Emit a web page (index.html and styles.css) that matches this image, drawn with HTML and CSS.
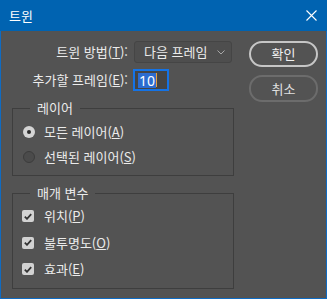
FILE: index.html
```html
<!DOCTYPE html>
<html lang="ko">
<head>
<meta charset="utf-8">
<title>트윈</title>
<link rel="stylesheet" href="styles.css">
</head>
<body>
<div class="window">
  <div class="titlebar">
    <span class="title">트윈</span>
    <svg class="close" width="11" height="11" viewBox="0 0 11 11"><path d="M0.5 0.5 L10.5 10.5 M10.5 0.5 L0.5 10.5" stroke="#fff" stroke-width="1.1" fill="none"/></svg>
  </div>
  <div class="content">
    <div class="left">
      <div class="fields">
        <label class="lbl">트윈 방법(<u>T</u>):</label>
        <div class="select"><span>다음 프레임</span><svg width="8" height="5" viewBox="0 0 8 5"><path d="M0.5 0.5 L4 4 L7.5 0.5" stroke="#a8a8a8" stroke-width="1" fill="none"/></svg></div>
        <label class="lbl">추가할 프레임(<u>E</u>):</label>
        <div class="input"><span class="sel">10</span><span class="caret"></span></div>
      </div>
      <fieldset class="group">
        <legend>레이어</legend>
        <div class="opt"><span class="radio on"></span><span>모든 레이어(<u>A</u>)</span></div>
        <div class="opt"><span class="radio"></span><span>선택된 레이어(<u>S</u>)</span></div>
      </fieldset>
      <fieldset class="group params">
        <legend>매개 변수</legend>
        <div class="opt"><span class="check"><svg width="8" height="7" viewBox="0 0 8 7"><path d="M0.8 3.6 L3 5.8 L7.2 1.2" stroke="#333" stroke-width="1.8" fill="none"/></svg></span><span>위치(<u>P</u>)</span></div>
        <div class="opt"><span class="check"><svg width="8" height="7" viewBox="0 0 8 7"><path d="M0.8 3.6 L3 5.8 L7.2 1.2" stroke="#333" stroke-width="1.8" fill="none"/></svg></span><span>불투명도(<u>O</u>)</span></div>
        <div class="opt"><span class="check"><svg width="8" height="7" viewBox="0 0 8 7"><path d="M0.8 3.6 L3 5.8 L7.2 1.2" stroke="#333" stroke-width="1.8" fill="none"/></svg></span><span>효과(<u>E</u>)</span></div>
      </fieldset>
    </div>
    <div class="right">
      <button class="btn primary">확인</button>
      <button class="btn">취소</button>
    </div>
  </div>
</div>
</body>
</html>
```
FILE: styles.css
```css
html, body {
  margin: 0;
  padding: 0;
  background: #535353;
}
body {
  font-family: "Noto Sans CJK KR", "Noto Sans", sans-serif;
  font-size: 13px;
  color: #ebebeb;
}
u {
  text-decoration: underline;
  text-underline-offset: 1px;
}
.window {
  width: 327px;
  height: 299px;
  box-sizing: border-box;
  border: 1px solid #0f6bc2;
  border-top: none;
  background: #535353;
  display: flex;
  flex-direction: column;
}
.titlebar {
  height: 31px;
  margin: 0 -1px;
  background: #0063b1;
  display: flex;
  align-items: center;
  justify-content: space-between;
  padding: 0 10px 0 9px;
  flex: none;
}
.title {
  color: #fff;
  font-size: 13px;
  line-height: 16px;
}
.close {
  display: block;
  margin-top: -1px;
}
.content {
  display: flex;
  gap: 15px;
  padding: 10px 8px 0 11px;
}
.left {
  width: 222px;
  display: flex;
  flex-direction: column;
}
.fields {
  display: grid;
  grid-template-columns: 116px auto;
  column-gap: 6px;
  row-gap: 6px;
  align-items: center;
  justify-items: start;
}
.lbl {
  justify-self: end;
  line-height: 16px;
  white-space: nowrap;
}
.select {
  width: 98px;
  height: 22px;
  box-sizing: border-box;
  border: 1px solid #454545;
  border-radius: 3px;
  background: #4e4e4e;
  display: flex;
  align-items: center;
  justify-content: space-between;
  padding: 0 6px 0 9px;
  line-height: 16px;
}
.select svg { display: block; }
.input {
  width: 36px;
  height: 22px;
  box-sizing: border-box;
  border: 2px solid #1473e6;
  background: #454545;
  display: flex;
  align-items: center;
  padding-left: 3px;
  margin-left: -1px;
}
.sel {
  background: #2c6cd0;
  color: #fff;
  font-size: 14px;
  line-height: 15px;
  padding: 0 1px;
  font-family: "Noto Sans", sans-serif;
}
.caret {
  width: 1px;
  height: 14px;
  background: #e8a040;
}
.group {
  margin: 9px 0 0 0;
  padding: 3px 0 6px 10px;
  border: 1px solid #3e3e3e;
  min-width: 0;
}
.group legend {
  padding: 0 7px;
  margin-left: 7px;
  line-height: 16px;
}
.params {
  margin-top: 9px;
  padding-top: 2px;
  padding-bottom: 5px;
}
.opt {
  height: 25px;
  display: flex;
  align-items: center;
  gap: 9px;
  line-height: 16px;
  white-space: nowrap;
}
.params .opt {
  height: 26.5px;
}
.radio {
  width: 12px;
  height: 12px;
  box-sizing: border-box;
  border-radius: 50%;
  border: 1px solid #3c3c3c;
  background: #4b4b4b;
  flex: none;
  display: flex;
  align-items: center;
  justify-content: center;
}
.radio.on {
  border: none;
  background: #d4d4d4;
}
.radio.on::after {
  content: "";
  width: 4px;
  height: 4px;
  border-radius: 50%;
  background: #2b2b2b;
}
.check {
  width: 12px;
  height: 12px;
  box-sizing: border-box;
  border-radius: 2px;
  background: #d2d2d2;
  flex: none;
  display: flex;
  align-items: center;
  justify-content: center;
  margin-left: -1px;
  margin-right: 1px;
}
.check svg { display: block; }
.right {
  display: flex;
  flex-direction: column;
  gap: 8px;
}
.btn {
  width: 69px;
  height: 26px;
  box-sizing: border-box;
  border-radius: 13px;
  border: 2px solid #c6c6c6;
  background: transparent;
  color: #f0f0f0;
  font-family: inherit;
  font-size: 13px;
  line-height: 16px;
  padding: 0;
}
.btn + .btn {
  height: 27px;
  border-color: #6c6c6c;
  color: #e0e0e0;
}
```
